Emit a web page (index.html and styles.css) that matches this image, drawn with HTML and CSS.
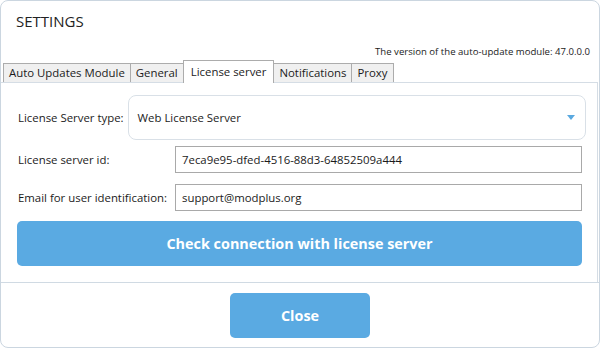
FILE: index.html
```html
<!DOCTYPE html>
<html lang="en">
<head>
  <meta charset="UTF-8">
  <title>Settings</title>
  <link rel="stylesheet" href="styles.css">
</head>
<body>
  <div class="window">
    <div class="header">
      <h1 class="title">SETTINGS</h1>
      <div class="version">The version of the auto-update module: 47.0.0.0</div>
    </div>

    <div class="tabs">
      <div class="tab">Auto Updates Module</div>
      <div class="tab">General</div>
      <div class="tab active">License server</div>
      <div class="tab">Notifications</div>
      <div class="tab">Proxy</div>
    </div>

    <div class="panel">
      <div class="type-row">
        <span class="label">License Server type:</span>
        <div class="combo">
          <span>Web License Server</span>
          <svg class="combo-arrow" viewBox="0 0 8 5" width="8" height="5">
            <path d="M0 0h8L4 5z"/>
          </svg>
        </div>
      </div>

      <div class="fields">
        <span class="label">License server id:</span>
        <div class="input">7eca9e95-dfed-4516-88d3-64852509a444</div>
        <span class="label">Email for user identification:</span>
        <div class="input">support@modplus.org</div>
      </div>

      <button class="btn btn-wide">Check connection with license server</button>
    </div>

    <div class="footer">
      <button class="btn btn-close">Close</button>
    </div>
  </div>
</body>
</html>
```

FILE: styles.css
```css
* {
  margin: 0;
  padding: 0;
  box-sizing: border-box;
}

body {
  font-family: "Open Sans", "Noto Sans", sans-serif;
  font-size: 11.4px;
  color: #1b1b1b;
  background: #ffffff;
}

.window {
  width: 600px;
  height: 348px;
  border: 1px solid #cbd6e0;
  border-radius: 8px;
  background: #ffffff;
  display: flex;
  flex-direction: column;
  overflow: hidden;
}

.header {
  padding: 10px 9px 0 15px;
}

.title {
  font-size: 15px;
  font-weight: 400;
  line-height: 20px;
  color: #222;
}

.version {
  margin-top: 14px;
  text-align: right;
  font-size: 9.6px;
  line-height: 14px;
}

/* tab strip */
.tabs {
  display: flex;
  align-items: flex-end;
  padding-left: 2px;
  margin-top: 1px;
  height: 22px;
}

.tab {
  height: 19px;
  padding: 0 5px;
  line-height: 17px;
  background: #f0f0f0;
  border: 1px solid #acacac;
  border-bottom: none;
  margin-right: -1px;
  white-space: nowrap;
}

.tab.active {
  height: 23px;
  line-height: 21px;
  padding: 0 7px;
  background: #ffffff;
  position: relative;
  z-index: 1;
  margin-bottom: -1px;
}

.panel {
  border-top: 1px solid #d5dde5;
  border-right: 1px solid #d5dde5;
  margin-right: 1px;
  padding: 12px 15px 16px 16px;
  display: flex;
  flex-direction: column;
  flex: 1;
}

.label {
  white-space: nowrap;
}

.type-row {
  display: flex;
  align-items: center;
  gap: 4px;
  margin-left: 1px;
  margin-right: -4px;
}

.combo {
  flex: 1;
  height: 45px;
  border: 1px solid #d9e0e7;
  border-radius: 8px;
  display: flex;
  align-items: center;
  justify-content: space-between;
  padding: 0 10px 0 9px;
}

.combo-arrow {
  fill: #5aa9e0;
}

.fields {
  display: grid;
  grid-template-columns: 157px 1fr;
  align-items: center;
  row-gap: 11px;
  margin: 6px 0 10px 1px;
}

.input {
  height: 27px;
  line-height: 25px;
  border: 1px solid #a9a9a9;
  padding: 0 6px;
}

.btn {
  border: none;
  background: #5aaae2;
  color: #ffffff;
  font-family: "Open Sans", "Noto Sans", sans-serif;
  font-size: 14.4px;
  font-weight: 700;
  border-radius: 5px;
  cursor: pointer;
}

.btn-wide {
  height: 45px;
  width: 100%;
}

.footer {
  border-top: 1px solid #d0dae3;
  height: 65px;
  display: flex;
  justify-content: center;
  padding-top: 10px;
}

.btn-close {
  width: 140px;
  height: 45px;
}
```
